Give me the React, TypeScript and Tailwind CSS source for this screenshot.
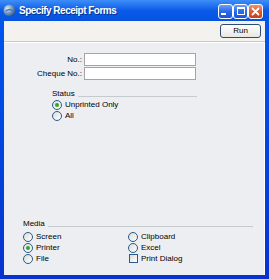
import React from "react";

function Radio({ label, checked }: { label: string; checked?: boolean }) {
  return (
    <div className="flex items-center h-[11px] gap-[3px]">
      <span className="w-[10px] h-[10px] rounded-full border border-[#2a5a8c] bg-gradient-to-br from-[#dcdcd5] to-white flex items-center justify-center">
        {checked && <span className="w-[4px] h-[4px] rounded-full bg-[#2aa82a]" />}
      </span>
      <span>{label}</span>
    </div>
  );
}

function Check({ label }: { label: string }) {
  return (
    <div className="flex items-center h-[11px] gap-[3px]">
      <span className="w-[9px] h-[9px] ml-[1px] border border-[#2a5a8c] bg-gradient-to-br from-[#dcdcd5] to-white" />
      <span>{label}</span>
    </div>
  );
}

function TitleButton({ kind }: { kind: "min" | "max" | "close" }) {
  const red = kind === "close";
  return (
    <div
      className={`w-[15px] h-[15px] rounded-[3px] border border-white flex items-center justify-center ${
        red ? "bg-gradient-to-b from-[#e99575] via-[#dd5a34] to-[#c3401c]" : "bg-gradient-to-b from-[#6c9cf5] via-[#2b6ae8] to-[#1a55d8]"
      }`}
    >
      {kind === "min" && <span className="w-[5px] h-[2px] bg-white self-end mb-[3px] mr-[4px]" />}
      {kind === "max" && <span className="w-[8px] h-[8px] border border-white border-t-2" />}
      {kind === "close" && (
        <svg width="9" height="9" viewBox="0 0 9 9">
          <path d="M1.5 1.5 L7.5 7.5 M7.5 1.5 L1.5 7.5" stroke="white" strokeWidth="1.8" strokeLinecap="round" />
        </svg>
      )}
    </div>
  );
}

export default function App() {
  return (
    <div className="w-[269px] h-[279px] flex flex-col bg-gradient-to-b from-[#0058ee] to-[#0832d0] font-['Liberation_Sans',Arial,sans-serif] text-[8px] text-black overflow-hidden">
      {/* title bar */}
      <div className="h-[21px] flex items-center bg-gradient-to-b from-[#3d8ef7] via-[#0a5ae8] to-[#0553e0] pl-[3px] pr-[6px]">
        <svg width="13" height="13" viewBox="0 0 13 13">
          <defs>
            <radialGradient id="g" cx="35%" cy="35%" r="70%">
              <stop offset="0" stopColor="#e6eef8" />
              <stop offset="0.5" stopColor="#7d9fc4" />
              <stop offset="1" stopColor="#2c4f86" />
            </radialGradient>
          </defs>
          <circle cx="6.5" cy="6.5" r="6" fill="url(#g)" />
          <path d="M3 7 Q6.5 4 10 7" stroke="#3b79c4" strokeWidth="1.5" fill="none" />
        </svg>
        <span className="ml-[3px] text-white font-bold text-[10px] tracking-[-0.5px] [text-shadow:1px_1px_0_#0a2f8a]">
          Specify Receipt Forms
        </span>
        <div className="ml-auto flex mt-[1px]">
          <TitleButton kind="min" />
          <TitleButton kind="max" />
          <TitleButton kind="close" />
        </div>
      </div>

      <div className="flex-1 flex flex-col mx-[4px] mb-[4px]">
        {/* toolbar */}
        <div className="h-[20px] bg-[#f3f2ee] flex justify-end items-start pt-[3px] pr-[4px]">
          <button className="w-[41px] h-[14px] rounded-[3px] border border-[#2d4c74] bg-gradient-to-b from-white to-[#e8e7e0] text-[8px] leading-none">
            Run
          </button>
        </div>
        <div className="h-[2px] border-t border-[#c9c8c2] bg-white" />

        {/* content */}
        <div className="flex-1 flex flex-col bg-[#eceef2] border-r border-white pt-[10px] pb-[11px]">
          <div className="flex flex-col gap-[1px]">
            <div className="flex items-center gap-[2px]">
              <span className="w-[78px] text-right">No.:</span>
              <div className="w-[112px] h-[13px] bg-white border border-[#a2a6ab]" />
            </div>
            <div className="flex items-center gap-[2px]">
              <span className="w-[78px] text-right">Cheque No.:</span>
              <div className="w-[112px] h-[13px] bg-white border border-[#a2a6ab]" />
            </div>
          </div>

          <div className="ml-[48px] w-[145px] mt-[8px]">
            <div className="flex items-end gap-[3px] h-[10px]">
              <span className="leading-none">Status</span>
              <span className="flex-1 border-t border-[#c6c9ce] mb-[1px]" />
            </div>
            <div className="mt-[1px]">
              <Radio label="Unprinted Only" checked />
              <Radio label="All" />
            </div>
          </div>

          <div className="mt-auto ml-[19px] w-[230px]">
            <div className="flex items-end gap-[3px] h-[10px]">
              <span className="leading-none">Media</span>
              <span className="flex-1 border-t border-[#c6c9ce] mb-[1px]" />
            </div>
            <div className="grid grid-cols-[105px_1fr] mt-[3px]">
              <Radio label="Screen" />
              <Radio label="Clipboard" />
              <Radio label="Printer" checked />
              <Radio label="Excel" />
              <Radio label="File" />
              <Check label="Print Dialog" />
            </div>
          </div>
        </div>
      </div>
    </div>
  );
}
